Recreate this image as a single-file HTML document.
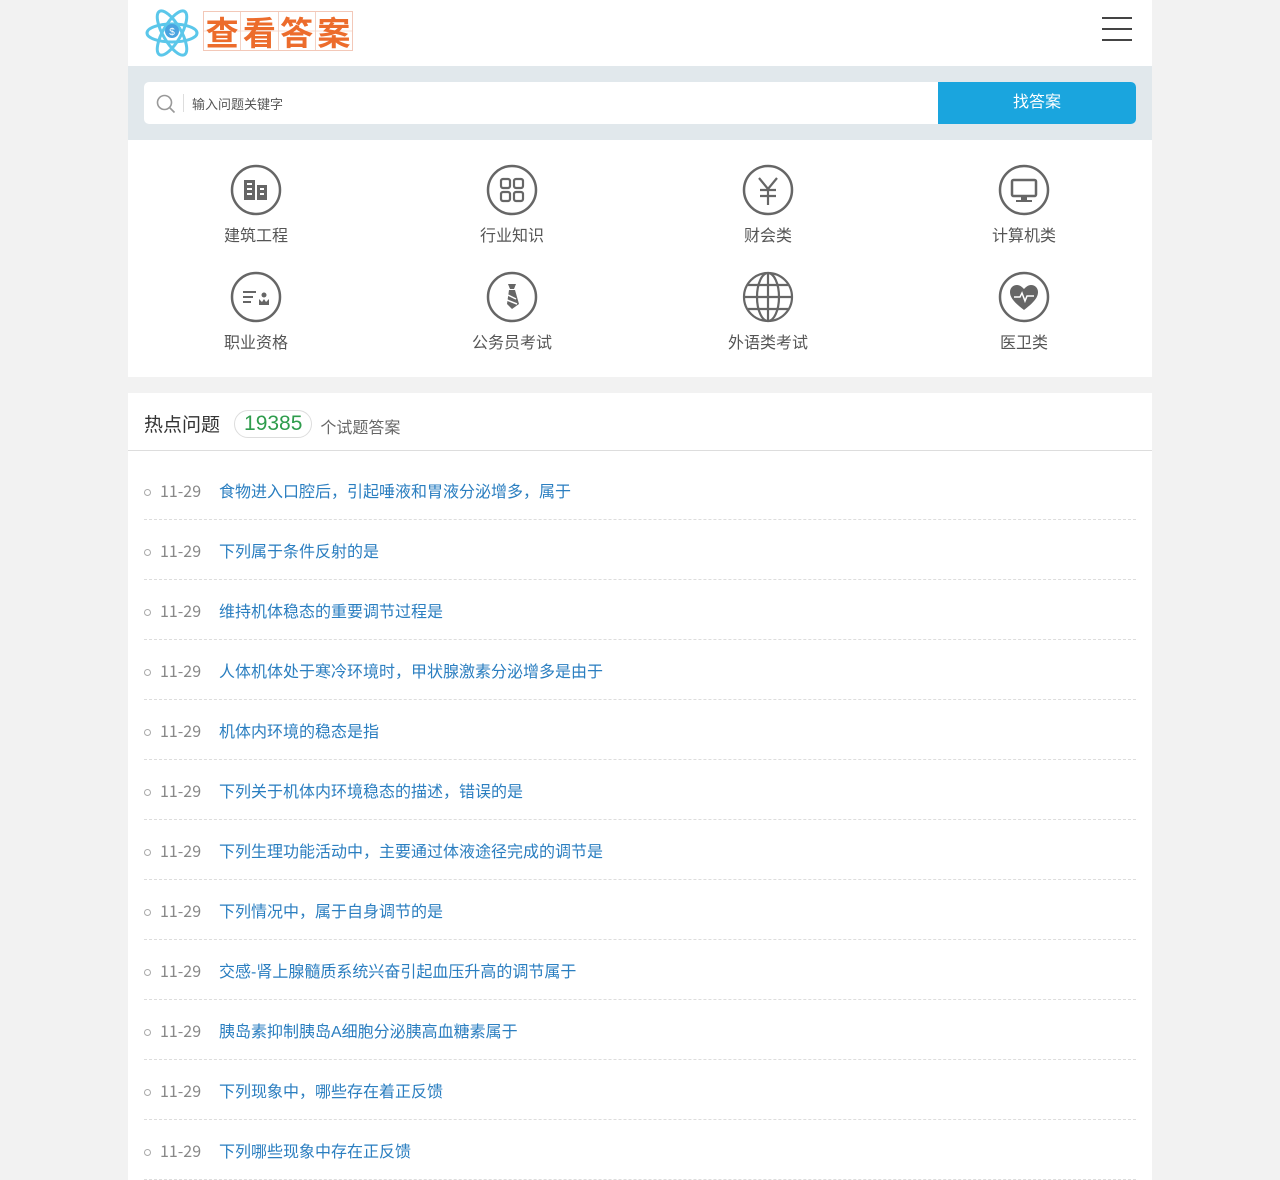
<!DOCTYPE html>
<html><head><meta charset="utf-8"><style>
*{margin:0;padding:0;box-sizing:border-box}
body{background:#f2f2f2;font-family:"Liberation Sans","Noto Sans CJK SC",sans-serif;width:1280px;height:1167px;overflow:hidden}
.wrap{width:1024px;margin:0 auto;position:relative}
.hd{height:66px;background:#fff;position:relative}
.logo{position:absolute;left:16px;top:8px}
.tt{position:absolute;left:75px;top:11px;width:150px;height:40px;border:1px solid #f3c8b8;display:flex}
.tt span{flex:1;border-right:1px solid #f3d2c5;color:#ec6c2c;font:bold 33px/38px "Noto Sans CJK SC",sans-serif;text-align:center;background:linear-gradient(#fff 49%,#f8ddd2 49%,#f8ddd2 51%,#fff 51%)}
.menu{position:absolute;right:20px;top:17px;width:30px}
.menu i{display:block;height:2px;background:#444;margin-bottom:9px}
.sb{height:74px;background:#e1e8ec;padding:16px}
.ib{height:42px;background:#fff;border-radius:5px;position:relative}
.ib .ph{position:absolute;left:48px;top:12px;font-size:13px;color:#555}
.ib .sep{position:absolute;left:39px;top:12px;width:1px;height:18px;background:#ddd}
.btn{position:absolute;right:0;top:0;width:198px;height:42px;background:#1aa5de;color:#fff;font-size:16px;text-align:center;line-height:42px;border-radius:0 5px 5px 0}
.cat{background:#fff;height:237px;display:flex;flex-wrap:wrap;padding-top:24px}
.c{width:256px;height:105px;text-align:center}
.c svg{display:block;margin:0 auto}
.c p{font-size:16px;color:#555;margin-top:6px}
.hot{background:#fff;margin-top:16px}
.hh{height:58px;border-bottom:1px solid #ddd;padding:0 16px;display:flex;align-items:center;padding-top:4px}
.hh b{font-weight:normal;font-size:19px;color:#333}
.num{margin-left:14px;border:1px solid #ddd;border-radius:14px;padding:0 9px;font-size:21px;color:#2e9c4c;line-height:26px}
.hh .s{font-size:16px;color:#666;margin-left:8px;margin-top:4px}
ul{list-style:none;padding:9px 16px 0}
li{height:60px;border-bottom:1px dashed #ddd;display:flex;align-items:center;padding-top:2px;line-height:20px}
li .d{width:7px;height:7px;border:1.5px solid #aaa;border-radius:50%;margin-right:9px;margin-top:3px}
li .t{font-size:16px;color:#888;width:59px;font-family:"Noto Sans CJK SC",sans-serif;line-height:20px;height:20px;position:relative;top:-1px}
li a{font-size:16px;color:#2a7ec0;text-decoration:none;line-height:20px;height:20px;position:relative;top:2px}
</style></head><body><div class="wrap">
<div class="hd">
<svg class="logo" width="56" height="50" viewBox="0 0 56 50"><g fill="none" stroke="#5bc7ea" stroke-width="3"><ellipse cx="28" cy="25" rx="25" ry="9"/><ellipse cx="28" cy="25" rx="25" ry="9" transform="rotate(60 28 25)"/><ellipse cx="28" cy="25" rx="25" ry="9" transform="rotate(-60 28 25)"/></g><circle cx="28" cy="23" r="7" fill="#4aa3e0"/><text x="28" y="27" font-size="10" fill="#fff" text-anchor="middle">$</text></svg>
<div class="tt"><span>查</span><span>看</span><span>答</span><span style="border:0">案</span></div>
<div class="menu"><i></i><i></i><i></i></div>
</div>
<div class="sb"><div class="ib"><svg style="position:absolute;left:12px;top:12px" width="20" height="20" viewBox="0 0 20 20" fill="none" stroke="#999" stroke-width="1.6"><circle cx="8.5" cy="8.5" r="7"/><path d="M13.5 13.5l5 5"/></svg><div class="sep"></div><div class="ph">输入问题关键字</div><div class="btn">找答案</div></div></div>
<div class="cat">
<div class="c"><svg width="52" height="52" viewBox="0 0 52 52"><circle cx="26" cy="26" r="24" fill="none" stroke="#666" stroke-width="2.5"/><path d="M14 36V16h11v20zM27 36V21h10v15z" fill="#666"/><path d="M17 20h5M17 25h5M17 30h5M30 25h4M30 30h4" stroke="#fff" stroke-width="2"/></svg><p>建筑工程</p></div>
<div class="c"><svg width="52" height="52" viewBox="0 0 52 52"><circle cx="26" cy="26" r="24" fill="none" stroke="#666" stroke-width="2.5"/><g fill="none" stroke="#666" stroke-width="2.2"><rect x="15" y="15" width="9" height="9" rx="2"/><rect x="28" y="15" width="9" height="9" rx="2"/><rect x="15" y="28" width="9" height="9" rx="2"/><rect x="28" y="28" width="9" height="9" rx="2"/></g></svg><p>行业知识</p></div>
<div class="c"><svg width="52" height="52" viewBox="0 0 52 52"><circle cx="26" cy="26" r="24" fill="none" stroke="#666" stroke-width="2.5"/><path d="M17 14l9 11 9-11M26 25v16M18 26h16M18 32h16" fill="none" stroke="#666" stroke-width="2.2"/></svg><p>财会类</p></div>
<div class="c"><svg width="52" height="52" viewBox="0 0 52 52"><circle cx="26" cy="26" r="24" fill="none" stroke="#666" stroke-width="2.5"/><rect x="14" y="16" width="24" height="16" rx="1.5" fill="none" stroke="#666" stroke-width="2.5"/><path d="M23 33h6v3h5v2H18v-2h5z" fill="#666"/></svg><p>计算机类</p></div>
<div class="c"><svg width="52" height="52" viewBox="0 0 52 52"><circle cx="26" cy="26" r="24" fill="none" stroke="#666" stroke-width="2.5"/><path d="M13 21h13M13 26h10M13 31h8" stroke="#666" stroke-width="2"/><circle cx="34" cy="24" r="2.5" fill="#666"/><path d="M29 34v-6l3 3 2-3 2 3 3-3v6z" fill="#666"/></svg><p>职业资格</p></div>
<div class="c"><svg width="52" height="52" viewBox="0 0 52 52"><circle cx="26" cy="26" r="24" fill="none" stroke="#666" stroke-width="2.5"/><path d="M22 13h8l-2 5h-4z" fill="#666"/><path d="M23 19h6l4 14-7 5-5-5z" fill="#666"/><path d="M22 24l8 4M21 29l10 4" stroke="#fff" stroke-width="1.5"/></svg><p>公务员考试</p></div>
<div class="c"><svg width="52" height="52" viewBox="0 0 52 52"><g fill="none" stroke="#666" stroke-width="2.2"><circle cx="26" cy="26" r="24"/><ellipse cx="26" cy="26" rx="11" ry="24"/><path d="M26 2v48M2 26h48M6 14h40M6 38h40"/></g></svg><p>外语类考试</p></div>
<div class="c"><svg width="52" height="52" viewBox="0 0 52 52"><circle cx="26" cy="26" r="24" fill="none" stroke="#666" stroke-width="2.5"/><path d="M26 39C14 30 12 25 12 21c0-4 3-7 7-7 3 0 5 2 7 4 2-2 4-4 7-4 4 0 7 3 7 7 0 4-2 9-14 18z" fill="#666"/><path d="M16 26h6l2-4 3 8 2-5h7" fill="none" stroke="#fff" stroke-width="1.5"/></svg><p>医卫类</p></div>
</div>
<div class="hot">
<div class="hh"><b>热点问题</b><span class="num">19385</span><span class="s">个试题答案</span></div>
<ul>
<li><i class="d"></i><span class="t">11-29</span><a>食物进入口腔后，引起唾液和胃液分泌增多，属于</a></li>
<li><i class="d"></i><span class="t">11-29</span><a>下列属于条件反射的是</a></li>
<li><i class="d"></i><span class="t">11-29</span><a>维持机体稳态的重要调节过程是</a></li>
<li><i class="d"></i><span class="t">11-29</span><a>人体机体处于寒冷环境时，甲状腺激素分泌增多是由于</a></li>
<li><i class="d"></i><span class="t">11-29</span><a>机体内环境的稳态是指</a></li>
<li><i class="d"></i><span class="t">11-29</span><a>下列关于机体内环境稳态的描述，错误的是</a></li>
<li><i class="d"></i><span class="t">11-29</span><a>下列生理功能活动中，主要通过体液途径完成的调节是</a></li>
<li><i class="d"></i><span class="t">11-29</span><a>下列情况中，属于自身调节的是</a></li>
<li><i class="d"></i><span class="t">11-29</span><a>交感-肾上腺髓质系统兴奋引起血压升高的调节属于</a></li>
<li><i class="d"></i><span class="t">11-29</span><a>胰岛素抑制胰岛A细胞分泌胰高血糖素属于</a></li>
<li><i class="d"></i><span class="t">11-29</span><a>下列现象中，哪些存在着正反馈</a></li>
<li><i class="d"></i><span class="t">11-29</span><a>下列哪些现象中存在正反馈</a></li>
</ul></div>
</div></body></html>
